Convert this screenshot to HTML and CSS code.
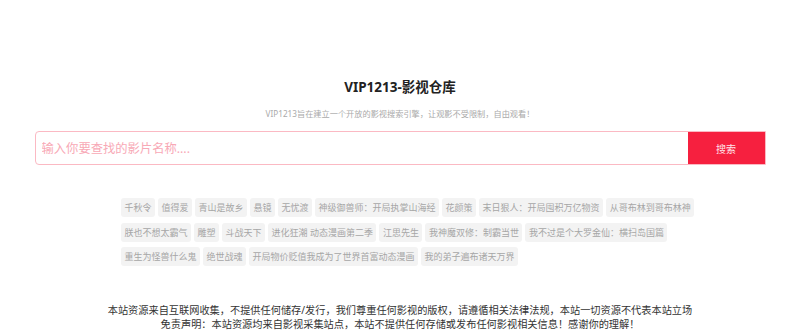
FILE: index.html
```html
<!DOCTYPE html>
<html lang="zh-CN">
<head>
  <meta charset="UTF-8">
  <title>VIP1213-影视仓库</title>
  <link rel="stylesheet" href="styles.css">
</head>
<body>

  <div class="page">
    <h1 class="title">VIP1213-影视仓库</h1>
    <p class="subtitle">VIP1213旨在建立一个开放的影视搜索引擎，让观影不受限制，自由观看！</p>

    <form class="search" onsubmit="return false">
      <input class="search-input" type="text" placeholder="输入你要查找的影片名称....">
      <button class="search-btn" type="submit">搜索</button>
    </form>

    <div class="tags">
      <a class="tag">千秋令</a>
      <a class="tag">值得爱</a>
      <a class="tag">青山是故乡</a>
      <a class="tag">悬镜</a>
      <a class="tag">无忧渡</a>
      <a class="tag">神级御兽师：开局执掌山海经</a>
      <a class="tag">花颜策</a>
      <a class="tag">末日狠人：开局囤积万亿物资</a>
      <a class="tag">从哥布林到哥布林神</a>
      <a class="tag">朕也不想太霸气</a>
      <a class="tag">雕塑</a>
      <a class="tag">斗战天下</a>
      <a class="tag">进化狂潮 动态漫画第二季</a>
      <a class="tag">江思先生</a>
      <a class="tag">我神魔双修：制霸当世</a>
      <a class="tag">我不过是个大罗金仙：横扫岛国篇</a>
      <a class="tag">重生为怪兽什么鬼</a>
      <a class="tag">绝世战魂</a>
      <a class="tag">开局物价贬值我成为了世界首富动态漫画</a>
      <a class="tag">我的弟子遍布诸天万界</a>
    </div>

    <div class="notice">
      <p>本站资源来自互联网收集，不提供任何储存/发行，我们尊重任何影视的版权，请遵循相关法律法规，本站一切资源不代表本站立场</p>
      <p>免责声明：本站资源均来自影视采集站点，本站不提供任何存储或发布任何影视相关信息！感谢你的理解！</p>
    </div>
  </div>

</body>
</html>
```

FILE: styles.css
```css
body {
  margin: 0;
  background: #fff;
  font-family: "Noto Sans", "Noto Sans CJK SC", sans-serif;
  color: #333;
}

.page {
  padding-top: 77px;
}

.title {
  margin: 0;
  text-align: center;
  font-size: 13.5px;
  line-height: 20px;
  font-weight: 700;
  color: #222;
}

.subtitle {
  margin: 11px 0 0;
  text-align: center;
  font-size: 8.2px;
  line-height: 12px;
  color: #aaa;
}

.search {
  display: flex;
  width: 731px;
  height: 34px;
  margin: 11px auto 0;
  box-sizing: border-box;
  border: 1px solid #fbb9c3;
  border-radius: 4px 0 0 4px;
}

.search-input {
  flex: 1;
  border: none;
  outline: none;
  padding: 0 6px;
  font-family: inherit;
  font-size: 12.3px;
  color: #333;
  background: transparent;
}

.search-input::placeholder {
  color: #f8a9b6;
}

.search-btn {
  width: 77px;
  border: none;
  background: #f6203f;
  color: #ffe3e8;
  font-family: inherit;
  font-size: 10px;
  cursor: pointer;
}

.tags {
  display: flex;
  flex-wrap: wrap;
  gap: 5.5px 3px;
  width: 600px;
  margin: 33px 0 0 121px;
}

.tag {
  height: 19px;
  line-height: 19px;
  padding: 0 3.5px;
  background: #f3f3f3;
  border-radius: 3px;
  font-size: 9px;
  color: #a6a6a6;
  cursor: pointer;
}

.notice {
  margin-top: 37px;
  text-align: center;
  font-size: 10.2px;
  line-height: 14px;
  color: #333;
}

.notice p {
  margin: 0;
}
```
